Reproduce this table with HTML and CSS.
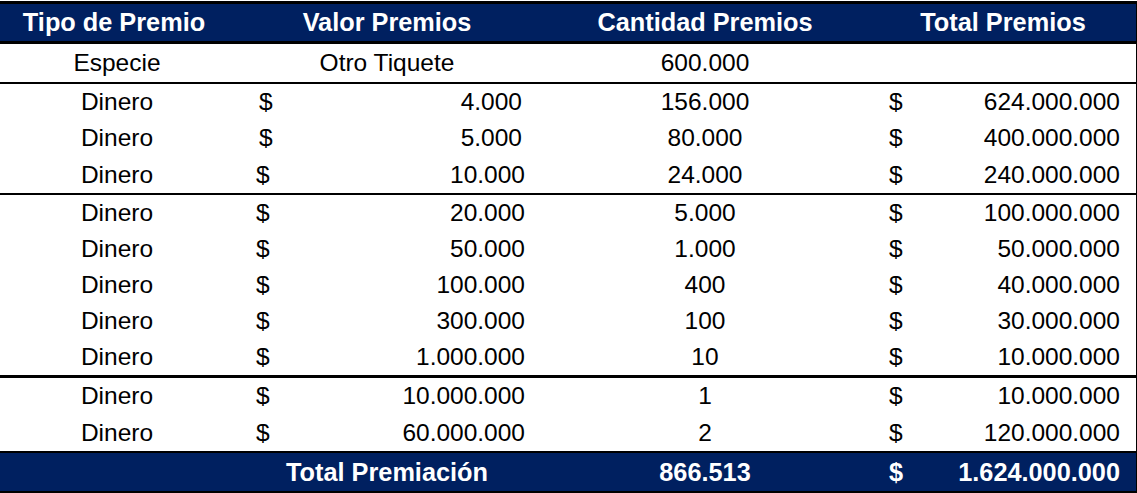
FILE: index.html
```html
<!DOCTYPE html>
<html lang="es">
<head>
<meta charset="utf-8">
<title>Premios</title>
<link rel="stylesheet" href="styles.css">
</head>
<body>
<div class="sheet">
  <div class="row head">
    <div class="c">Tipo de Premio</div>
    <div class="c">Valor Premios</div>
    <div class="c">Cantidad Premios</div>
    <div class="c">Total Premios</div>
  </div>
  <div class="row first sep2">
    <div class="c">Especie</div>
    <div class="c">Otro Tiquete</div>
    <div class="c">600.000</div>
    <div class="c"></div>
  </div>

  <div class="row">
    <div class="c">Dinero</div>
    <div class="acc b alt"><span>$</span><span>4.000</span></div>
    <div class="c">156.000</div>
    <div class="acc d"><span>$</span><span>624.000.000</span></div>
  </div>
  <div class="row">
    <div class="c">Dinero</div>
    <div class="acc b alt"><span>$</span><span>5.000</span></div>
    <div class="c">80.000</div>
    <div class="acc d"><span>$</span><span>400.000.000</span></div>
  </div>
  <div class="row tall sep2">
    <div class="c">Dinero</div>
    <div class="acc b"><span>$</span><span>10.000</span></div>
    <div class="c">24.000</div>
    <div class="acc d"><span>$</span><span>240.000.000</span></div>
  </div>

  <div class="row">
    <div class="c">Dinero</div>
    <div class="acc b"><span>$</span><span>20.000</span></div>
    <div class="c">5.000</div>
    <div class="acc d"><span>$</span><span>100.000.000</span></div>
  </div>
  <div class="row">
    <div class="c">Dinero</div>
    <div class="acc b"><span>$</span><span>50.000</span></div>
    <div class="c">1.000</div>
    <div class="acc d"><span>$</span><span>50.000.000</span></div>
  </div>
  <div class="row">
    <div class="c">Dinero</div>
    <div class="acc b"><span>$</span><span>100.000</span></div>
    <div class="c">400</div>
    <div class="acc d"><span>$</span><span>40.000.000</span></div>
  </div>
  <div class="row">
    <div class="c">Dinero</div>
    <div class="acc b"><span>$</span><span>300.000</span></div>
    <div class="c">100</div>
    <div class="acc d"><span>$</span><span>30.000.000</span></div>
  </div>
  <div class="row sep3">
    <div class="c">Dinero</div>
    <div class="acc b"><span>$</span><span>1.000.000</span></div>
    <div class="c">10</div>
    <div class="acc d"><span>$</span><span>10.000.000</span></div>
  </div>

  <div class="row">
    <div class="c">Dinero</div>
    <div class="acc b"><span>$</span><span>10.000.000</span></div>
    <div class="c">1</div>
    <div class="acc d"><span>$</span><span>10.000.000</span></div>
  </div>
  <div class="row tall sep2">
    <div class="c">Dinero</div>
    <div class="acc b"><span>$</span><span>60.000.000</span></div>
    <div class="c">2</div>
    <div class="acc d"><span>$</span><span>120.000.000</span></div>
  </div>

  <div class="row total">
    <div class="c"></div>
    <div class="c">Total Premiación</div>
    <div class="c">866.513</div>
    <div class="acc d"><span>$</span><span>1.624.000.000</span></div>
  </div>
</div>
</body>
</html>
```

FILE: styles.css
```css
* {
  box-sizing: content-box;
}

html, body {
  margin: 0;
  padding: 0;
  background: #ffffff;
}

body {
  font-family: "Liberation Sans", Arial, sans-serif;
  font-size: 24.5px;
  color: #000000;
}

.sheet {
  width: 1136px;
  margin-top: 1px;
  border-right: 1px solid #000000;
}

.row {
  display: grid;
  grid-template-columns: 234px 306px 330px 266px;
  height: 36px;
  align-items: center;
}

.row.tall {
  height: 37px;
}

.c {
  text-align: center;
  white-space: nowrap;
}

.acc {
  display: flex;
  justify-content: space-between;
  white-space: nowrap;
}

.acc.b {
  padding: 0 15px 0 22px;
}

.acc.b.alt {
  padding: 0 18px 0 25px;
}

.acc.d {
  padding: 0 16px 0 19px;
}

.head {
  height: 37px;
  background: #002060;
  color: #ffffff;
  font-weight: bold;
  font-size: 25.3px;
  border-top: 3px solid #000000;
  border-bottom: 3px solid #000000;
}

.head .c:first-child {
  padding-right: 6px;
}

.first {
  height: 38px;
}

.sep2 {
  border-bottom: 2px solid #000000;
}

.sep3 {
  border-bottom: 3px solid #000000;
}

.total {
  height: 38px;
  background: #002060;
  color: #ffffff;
  font-weight: bold;
  font-size: 25.3px;
  border-bottom: 2px solid #000000;
}
```
